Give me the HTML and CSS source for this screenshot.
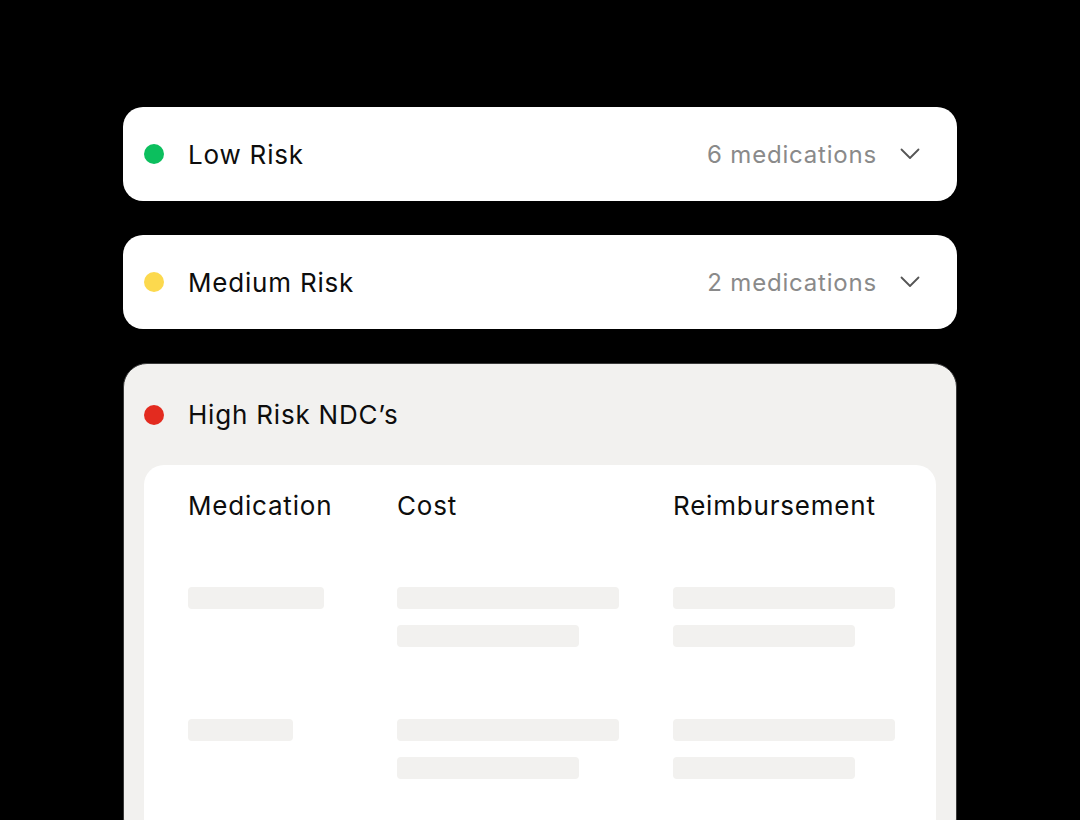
FILE: index.html
```html
<!DOCTYPE html>
<html>
	<head>
		<meta charset="UTF-8">
		<title>Risk groups</title>
		<link rel="stylesheet" href="styles.css">
	</head>
	<body>
		<div class="list">
			<div class="group">
				<span class="dot green"></span>
				<span class="name">Low Risk</span>
				<span class="count">6 medications</span>
				<svg class="chev" width="20" height="12" viewBox="0 0 20 12"><path d="M1.5 1.5 L10 10 L18.5 1.5" fill="none" stroke="#555" stroke-width="1.8" stroke-linecap="round" stroke-linejoin="round"/></svg>
			</div>
			<div class="group">
				<span class="dot yellow"></span>
				<span class="name">Medium Risk</span>
				<span class="count">2 medications</span>
				<svg class="chev" width="20" height="12" viewBox="0 0 20 12"><path d="M1.5 1.5 L10 10 L18.5 1.5" fill="none" stroke="#555" stroke-width="1.8" stroke-linecap="round" stroke-linejoin="round"/></svg>
			</div>
			<div class="group open">
				<div class="head">
					<span class="dot red"></span>
					<span class="name">High Risk NDC’s</span>
				</div>
				<div class="table">
					<div class="th">Medication</div>
					<div class="th">Cost</div>
					<div class="th">Reimbursement</div>

					<div class="cell"><i class="bar" style="width:136px"></i></div>
					<div class="cell"><i class="bar" style="width:222px"></i><i class="bar" style="width:182px"></i></div>
					<div class="cell"><i class="bar" style="width:222px"></i><i class="bar" style="width:182px"></i></div>

					<div class="cell"><i class="bar" style="width:105px"></i></div>
					<div class="cell"><i class="bar" style="width:222px"></i><i class="bar" style="width:182px"></i></div>
					<div class="cell"><i class="bar" style="width:222px"></i><i class="bar" style="width:182px"></i></div>
				</div>
			</div>
		</div>
	</body>
</html>
```

FILE: styles.css
```css
html, body{ margin: 0; padding: 0; background: #000; height: 820px; overflow: hidden;}
body{ font-family: Inter, "Liberation Sans", sans-serif; color: #111;}
.list{ width: 834px; margin: 107px 0 0 123px; display: flex; flex-direction: column; gap: 34px;}
.group{ background: #fff; border-radius: 20px; height: 94px; box-sizing: border-box; padding: 0 37px 0 21px; display: flex; align-items: center;}
.dot{ width: 20px; height: 20px; border-radius: 50%; flex: none; margin-right: 24px;}
.green{ background: #0cbf5e;}
.yellow{ background: #fcd94e;}
.red{ background: #e32b1f;}
.name{ font-size: 26px; letter-spacing: 0.8px; color: #0d0d0d; flex: 1;}
.count{ font-size: 24px; letter-spacing: 0.8px; color: #8a8a8a; margin-right: 23px;}
.chev{ display: block; flex: none;}
.group.open{ display: block; height: 480px; padding: 0 20px; background: #f2f1ef; border: 1px solid #3a3a3a; border-radius: 24px;}
.open .head{ display: flex; align-items: center; height: 101px;}
.table{ background: #fff; border-radius: 20px; padding: 22px 40px 0 44px; display: grid; grid-template-columns: 209px 276px 222px; align-content: start; height: 400px;}
.th{ font-size: 26px; letter-spacing: 0.8px; color: #0d0d0d; height: 100px; line-height: 38px;}
.cell{ display: flex; flex-direction: column; gap: 16px; height: 132px;}
.bar{ display: block; height: 22px; border-radius: 4px; background: #f2f1ef;}
```
